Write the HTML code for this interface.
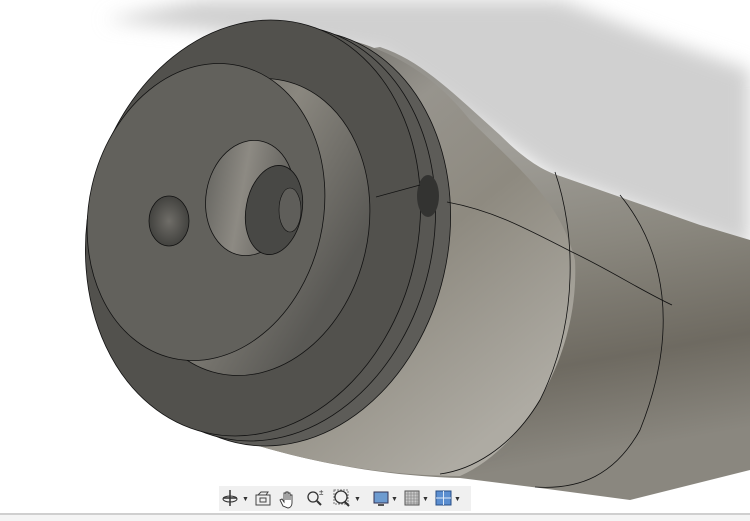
<!DOCTYPE html>
<html><head><style>
html,body{margin:0;padding:0;width:750px;height:521px;overflow:hidden;background:#fff}
svg{display:block}
</style></head><body>
<svg width="750" height="521" viewBox="0 0 750 521" xmlns="http://www.w3.org/2000/svg">
<defs>
<filter id="blur" x="-20%" y="-20%" width="140%" height="140%"><feGaussianBlur stdDeviation="9"/></filter>
<filter id="b6" x="-30%" y="-30%" width="160%" height="160%"><feGaussianBlur stdDeviation="12"/></filter>
<linearGradient id="tube" x1="0" y1="0" x2="0.2" y2="1">
<stop offset="0" stop-color="#8e8c86"/><stop offset="0.3" stop-color="#a19f99"/><stop offset="0.55" stop-color="#8a877e"/><stop offset="0.8" stop-color="#6e6a61"/><stop offset="1" stop-color="#8a877f"/>
</linearGradient>
<linearGradient id="neck" x1="0" y1="0" x2="0.6" y2="1">
<stop offset="0" stop-color="#5e5d58"/><stop offset="0.35" stop-color="#97948d"/><stop offset="0.6" stop-color="#8e8a80"/><stop offset="1" stop-color="#aeaba3"/>
</linearGradient>
<linearGradient id="boss" x1="0" y1="0" x2="1" y2="0.4">
<stop offset="0" stop-color="#5c5b57"/><stop offset="0.5" stop-color="#8a877f"/><stop offset="1" stop-color="#5a5955"/>
</linearGradient>
<radialGradient id="hole" cx="0.5" cy="0.5" r="0.6">
<stop offset="0" stop-color="#6f6d68"/><stop offset="1" stop-color="#3a3a37"/>
</radialGradient>
<linearGradient id="cb" x1="0" y1="0" x2="1" y2="0">
<stop offset="0" stop-color="#6b6a65"/><stop offset="0.4" stop-color="#8d8a83"/><stop offset="1" stop-color="#5d5c58"/>
</linearGradient>
</defs>
<polygon points="105,20 200,0 560,0 650,35 750,70 750,250 550,175 380,55 200,30" fill="#d0d0d0" filter="url(#blur)"/>
<!-- tube -->
<path d="M380,47 C420,60 450,90 500,135 C520,155 540,170 560,176 L700,225 L750,240 L750,470 L630,500 L540,488 L460,478 C380,476 300,460 240,440 L300,60 Z" fill="url(#tube)"/>
<ellipse cx="470" cy="330" rx="55" ry="110" fill="#b0ada6" opacity="0.5" filter="url(#b6)"/>
<!-- neck -->
<path d="M300,30 C380,40 430,70 470,120 C520,170 560,200 575,260 C580,360 520,450 460,476 C380,476 300,460 240,440 Z" fill="url(#neck)"/>
<!-- flange -->
<ellipse cx="283" cy="238" rx="165" ry="210" transform="rotate(13 283 238)" fill="#5d5c58" stroke="#111" stroke-width="0.8"/>
<ellipse cx="268" cy="233" rx="165" ry="210" transform="rotate(13 268 233)" fill="#585753" stroke="#111" stroke-width="0.8"/>
<ellipse cx="253" cy="228" rx="165" ry="210" transform="rotate(13 253 228)" fill="#52514d" stroke="#111" stroke-width="0.8"/>
<!-- boss cylinder -->
<ellipse cx="251" cy="227" rx="117" ry="150" transform="rotate(13 251 227)" fill="url(#boss)" stroke="#111" stroke-width="0.8"/>
<!-- boss face -->
<ellipse cx="206" cy="212" rx="117" ry="150" transform="rotate(13 206 212)" fill="#62615c" stroke="#111" stroke-width="0.8"/>
<!-- small hole -->
<ellipse cx="169" cy="221" rx="20" ry="25" fill="url(#hole)" stroke="#111" stroke-width="0.8"/>
<!-- counterbore -->
<ellipse cx="250" cy="198" rx="44" ry="58" transform="rotate(10 250 198)" fill="url(#cb)" stroke="#111" stroke-width="0.8"/>
<ellipse cx="274" cy="210" rx="28" ry="45" transform="rotate(10 274 210)" fill="#484845" stroke="#111" stroke-width="0.8"/>
<ellipse cx="290" cy="210" rx="11" ry="22" fill="#5f5e5a" stroke="#111" stroke-width="0.6"/>
<!-- side hole -->
<ellipse cx="428" cy="196" rx="11" ry="21" fill="#333331"/>
<!-- lines -->
<g stroke="#111" stroke-width="0.8" fill="none">
<path d="M376,197 L420,185"/>
<path d="M447,202 C490,210 520,225 572,252 C610,270 640,290 672,305"/>
<path d="M555,172 C575,230 580,320 540,400 C510,450 470,470 440,474"/>
<path d="M620,195 C665,250 680,330 640,430 C615,475 580,490 535,487"/>
</g>
<!-- toolbar -->
<rect x="219" y="486" width="252" height="25" fill="#f0f0f0"/>
<rect x="0" y="513" width="750" height="2" fill="#cfcfcf"/>
<rect x="0" y="515" width="750" height="6" fill="#f4f4f4"/>
<g font-family="Liberation Sans, DejaVu Sans, sans-serif" font-size="7" fill="#333">
<path d="M230,490v16M223,498h14" stroke="#333" stroke-width="1.5"/><ellipse cx="230" cy="499" rx="7" ry="3" fill="none" stroke="#333"/><text x="242" y="501">▼</text>
<rect x="256" y="495" width="14" height="10" fill="none" stroke="#444"/><path d="M258,495l3,-3h7l-2,3" fill="none" stroke="#444"/><rect x="260" y="498" width="6" height="4" fill="none" stroke="#444"/>
<path d="M283,506 l-3,-6 l2,-1 l2,3 v-9 h2 v7 v-8 h2 v8 v-7 h2 v7 v-5 h2 v8 c0,3 -2,5 -4,5 z" fill="#fff" stroke="#333" stroke-width="0.9"/>
<circle cx="313" cy="497" r="5" fill="none" stroke="#333" stroke-width="1.3"/><line x1="317" y1="501" x2="321" y2="505" stroke="#333" stroke-width="2"/><text x="319" y="495" font-size="8">±</text>
<rect x="334" y="490" width="14" height="14" fill="none" stroke="#777" stroke-dasharray="2 1"/><circle cx="341" cy="497" r="6" fill="none" stroke="#333" stroke-width="1.3"/><line x1="345" y1="502" x2="349" y2="506" stroke="#333" stroke-width="2"/><text x="354" y="501">▼</text>
<rect x="374" y="492" width="14" height="11" fill="#6d9bd0" stroke="#335"/><rect x="378" y="504" width="6" height="2" fill="#555"/><text x="391" y="501">▼</text>
<rect x="405" y="491" width="14" height="14" fill="#ccc" stroke="#555"/><path d="M408,491v14M411,491v14M414,491v14M417,491v14M405,494h14M405,497h14M405,500h14M405,503h14" stroke="#777" stroke-width="0.6"/><text x="422" y="501">▼</text>
<rect x="436" y="491" width="15" height="14" fill="#5b8ed0" stroke="#2a4f86"/><path d="M443.5,491v14M436,498h15" stroke="#dfeaf7"/><text x="454" y="501">▼</text>
</g>
</svg>
</body></html>
